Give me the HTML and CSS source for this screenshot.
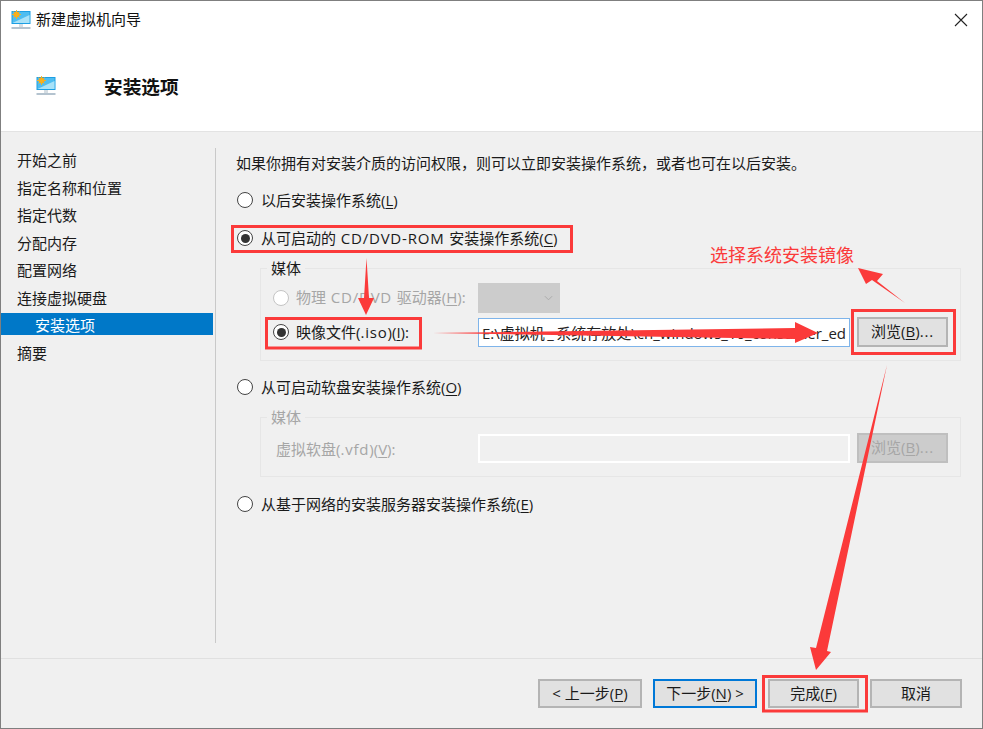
FILE: index.html
```html
<!DOCTYPE html>
<html lang="zh-CN">
<head>
<meta charset="utf-8">
<title>新建虚拟机向导</title>
<link rel="stylesheet" href="styles.css">
</head>
<body>
<svg class="defs" width="0" height="0" aria-hidden="true">
  <symbol id="vm" viewBox="0 0 20 20">
    <rect x="0.5" y="1" width="19" height="13" fill="#1c9fe4"/>
    <rect x="1.5" y="2" width="17" height="11" fill="#4fbdf0"/>
    <path d="M1.5 13L18.5 5v8z" fill="#a9e2f8"/>
    <circle cx="5.5" cy="4.5" r="3" fill="#f7a81c"/>
    <path d="M5.5 0v9M1 4.5h9M2.4 1.4l6.2 6.2M8.6 1.4L2.4 7.6" stroke="#f7b21c" stroke-width="0.9"/>
    <rect x="8" y="14" width="4" height="3" fill="#d5dde3"/>
    <rect x="0.5" y="17" width="19" height="2" fill="#b4c3cf"/>
  </symbol>
</svg>
<div class="window">
  <header class="header">
    <div class="titlebar">
      <svg class="title-icon"><use href="#vm"/></svg>
      <span class="title-text">新建虚拟机向导</span>
      <svg class="close" viewBox="0 0 14 14"><path d="M1 1l12 12M13 1L1 13" stroke="#222" stroke-width="1.1" fill="none"/></svg>
    </div>
    <div class="heading">
      <svg class="heading-icon"><use href="#vm"/></svg>
      <h1 class="heading-text">安装选项</h1>
    </div>
  </header>

  <main class="main">
    <nav class="sidebar">
      <div class="step">开始之前</div>
      <div class="step">指定名称和位置</div>
      <div class="step">指定代数</div>
      <div class="step">分配内存</div>
      <div class="step">配置网络</div>
      <div class="step">连接虚拟硬盘</div>
      <div class="step step-active">安装选项</div>
      <div class="step">摘要</div>
    </nav>
    <section class="content">
      <p class="intro">如果你拥有对安装介质的访问权限，则可以立即安装操作系统，或者也可在以后安装。</p>
      <div class="option option-later"><span class="radio"></span><span>以后安装操作系统(<u>L</u>)</span></div>
      <div class="option option-cd"><span class="radio radio-on"></span><span>从可启动的<span class="lat"> CD/DVD-ROM </span>安装操作系统(<u>C</u>)</span></div>

      <div class="group group-cd">
        <div class="legend">媒体</div>
        <div class="row row-first">
          <div class="option option-inner option-raised is-disabled"><span class="radio radio-off"></span><span>物理<span class="lat"> CD/DVD </span>驱动器(<u>H</u>):</span></div>
          <div class="select"><svg class="chevron" viewBox="0 0 10 6"><path d="M1 1l4 4 4-4" stroke="#a8a8a8" fill="none"/></svg></div>
        </div>
        <div class="row">
          <div class="option option-inner"><span class="radio radio-on"></span><span>映像文件(<span class="lat">.iso</span>)(<u>I</u>):</span></div>
          <input class="path" type="text" readonly value="E:\虚拟机&#8201;_&#8201;系统存放处\cn_windows_10_consumer_edition_version_1909">
          <button class="btn btn-browse">浏览(<u>B</u>)<span class="lat">...</span></button>
        </div>
      </div>

      <div class="option option-floppy"><span class="radio"></span><span>从可启动软盘安装操作系统(<u>O</u>)</span></div>

      <div class="group group-floppy">
        <div class="legend is-disabled">媒体</div>
        <div class="row row-floppy">
          <div class="floppy-label is-disabled">虚拟软盘(<span class="lat">.vfd</span>)(<u>V</u>):</div>
          <div class="path-off"></div>
          <button class="btn btn-browse btn-off">浏览(<u>B</u>)<span class="lat">...</span></button>
        </div>
      </div>

      <div class="option option-net"><span class="radio"></span><span>从基于网络的安装服务器安装操作系统(<u>E</u>)</span></div>
    </section>
  </main>

  <footer class="footer">
    <button class="btn btn-wide">&lt; 上一步(<u>P</u>)</button>
    <button class="btn btn-wide btn-default">下一步(<u>N</u>) &gt;</button>
    <button class="btn btn-finish">完成(<u>F</u>)</button>
    <button class="btn btn-cancel">取消</button>
  </footer>

  <svg class="marks" viewBox="0 0 983 729" aria-hidden="true">
    <g fill="none" stroke="#fb3a3a" stroke-width="3">
      <rect x="232.5" y="226.5" width="339" height="25"/>
      <rect x="266.5" y="318.5" width="154" height="29.5"/>
      <rect x="852.5" y="310.5" width="102" height="43"/>
      <rect x="763.5" y="676.5" width="103" height="34.5"/>
    </g>
    <g fill="#fb3a3a">
      <polygon points="366.5,258 369,298 374,298 366,315 358,298 364,298"/>
      <polygon points="433,333 795,328 795,322 818,333 795,343 795,339"/>
      <polygon points="905,303 877,281 883,274 858,268 866,284 872,280"/>
      <polygon points="887,365 827,651 831,652 816,670 810,647 816,648"/>
    </g>
  </svg>
  <span class="note">选择系统安装镜像</span>
</div>
</body>
</html>
```

FILE: styles.css
```css
* { box-sizing: border-box; }
html, body { margin: 0; padding: 0; }
body {
  width: 983px;
  height: 729px;
  overflow: hidden;
  font: 15px/22px "Open Sans", "Noto Sans CJK SC", sans-serif;
  color: #1a1a1a;
  background: #f0f0f0;
}
.defs { position: absolute; }
.window {
  position: relative;
  width: 983px;
  height: 729px;
  display: flex;
  flex-direction: column;
  border: 1px solid #7f7f7f;
  background: #f0f0f0;
}
u { text-underline-offset: 2px; }
.lat { letter-spacing: 0.8px; }

/* header */
.header {
  height: 131px;
  flex: none;
  background: #fff;
  border-bottom: 1px solid #e3e3e3;
}
.titlebar {
  display: flex;
  align-items: center;
  height: 38px;
  padding: 0 14px 0 10px;
}
.title-icon { width: 20px; height: 20px; flex: none; }
.title-text { margin: 0 0 2px 5px; font-size: 15px; color: #111; }
.close { width: 14px; height: 14px; margin-left: auto; }
.heading {
  display: flex;
  align-items: center;
  height: 20px;
  margin-top: 38px;
  padding-left: 35px;
}
.heading-icon { width: 20px; height: 20px; flex: none; margin-bottom: 3px; }
.heading-text {
  margin: 0 0 0 48px;
  font-size: 18.67px;
  line-height: 22px;
  font-weight: 700;
  color: #111;
}

/* body */
.main {
  flex: 1;
  display: flex;
  padding: 16px 0 15px;
  min-height: 0;
}
.sidebar {
  width: 215px;
  flex: none;
  padding: 0 2px 0 0;
  border-right: 1px solid #c9c9c9;
  display: flex;
  flex-direction: column;
  gap: 5.5px;
}
.step { height: 22px; padding: 1px 0 0 16px; }
.step-active { padding-left: 34px; background: #0078c8; color: #fff; }
.content { flex: 1; padding: 3px 0 0 20px; }
.intro { margin: 0; height: 22px; padding-top: 1px; }

.option { display: flex; align-items: center; height: 22px; }
.option-later { margin-top: 16px; }
.option-cd { margin-top: 16px; }
.option-floppy { margin-top: 15px; }
.option-net { margin-top: 16px; }
.option-raised > span:last-child { margin-bottom: 2px; }
.radio {
  width: 16px;
  height: 16px;
  flex: none;
  margin: 0 8px 0 1px;
  border: 1.5px solid #444;
  border-radius: 50%;
  background: #fff;
}
.radio-on { display: flex; align-items: center; justify-content: center; }
.radio-on::before {
  content: "";
  width: 9px;
  height: 9px;
  border-radius: 50%;
  background: #333;
}
.radio-off { border-color: #c4c4c4; }
.option-inner .radio { margin-right: 7px; }

.group {
  width: 701px;
  margin: 19px 0 0 24px;
  border: 1px solid #e6e6e6;
}
.group-cd { height: 93px; }
.group-floppy { height: 60px; }
.legend {
  width: fit-content;
  height: 22px;
  margin: -11px 0 0 6px;
  padding: 0 4px;
  background: #f0f0f0;
  line-height: 20px;
}
.row {
  display: flex;
  align-items: center;
  height: 30px;
  margin-top: 4px;
  padding-left: 11px;
}
.row-first { margin-top: 3px; }
.row-floppy { padding-left: 15px; }
.option-inner { width: 206px; flex: none; }
.floppy-label { width: 202px; flex: none; padding-top: 1px; }
.is-disabled { color: #a6a6a6; }
.select {
  width: 82px;
  height: 30px;
  padding-right: 7px;
  background: #cccccc;
  display: flex;
  align-items: center;
  justify-content: flex-end;
}
.chevron { width: 9px; height: 6px; }
.path {
  width: 372px;
  height: 29px;
  flex: none;
  padding: 0 3px;
  border: 1px solid #7eb4ea;
  background: #fff;
  font: inherit;
  color: #222;
  outline: none;
}
.path-off {
  width: 372px;
  height: 29px;
  flex: none;
  border: 2px solid #fff;
  background: #f0f0f0;
}

/* buttons */
.btn {
  height: 29px;
  padding: 0 0 2px;
  border: 2px solid #b4b4b4;
  background: #e1e1e1;
  font: inherit;
  color: #1a1a1a;
}
.btn-browse { width: 91px; height: 30px; margin-left: 7px; flex: none; }
.btn-off { background: #cccccc; border-color: #bfbfbf; color: #a6a6a6; }
.footer {
  flex: none;
  height: 70px;
  padding: 20px 20px 0 0;
  border-top: 1px solid #e0e0e0;
  display: flex;
  justify-content: flex-end;
  gap: 11px;
}
.btn-wide { width: 104px; }
.btn-default { border-color: #0078d7; }
.btn-finish { width: 91px; }
.btn-cancel { width: 92px; }

/* annotations over the dialog */
.marks {
  position: absolute;
  left: -1px;
  top: -1px;
  width: 983px;
  height: 729px;
  pointer-events: none;
}
.note {
  position: absolute;
  left: 709px;
  top: 242px;
  font-size: 18px;
  line-height: 24px;
  color: #fb3a3a;
  white-space: nowrap;
}
```
